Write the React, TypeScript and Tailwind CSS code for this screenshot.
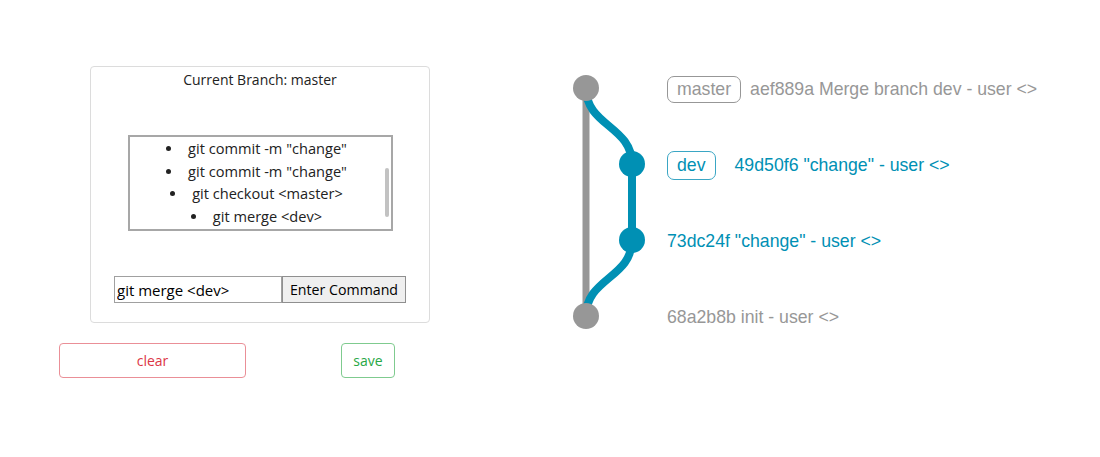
const HISTORY = [
  'git commit -m "change"',
  'git commit -m "change"',
  'git checkout <master>',
  'git merge <dev>',
]

type Row = {
  tag?: string
  text: string
  color: 'gray' | 'blue'
}

const ROWS: Row[] = [
  { tag: 'master', text: 'aef889a Merge branch dev - user <>', color: 'gray' },
  { tag: 'dev', text: '49d50f6 "change" - user <>', color: 'blue' },
  { text: '73dc24f "change" - user <>', color: 'blue' },
  { text: '68a2b8b init - user <>', color: 'gray' },
]

const GRAY = '#979797'
const BLUE = '#0090b4'

export default function App() {
  return (
    <div className="w-full h-[457px] bg-white flex pt-[50px] font-['Open_Sans',sans-serif] text-[#222]">

      {/* ── LEFT: terminal panel ── */}
      <div className="w-[570px] shrink-0">
        <div className="ml-[90px] mt-[16px] w-[340px] h-[257px] border border-[#dcdcdc] rounded flex flex-col items-center">
          <div className="mt-[3px] text-[14px] leading-5">Current Branch: master</div>

          {/* command history */}
          <div className="relative mt-[45px] w-[265px] h-[96px] border-2 border-[#a7a7a7] overflow-hidden">
            <ul className="text-[14.6px] leading-[22.7px] pr-[7px]">
              {HISTORY.map((c, i) => (
                <li key={i} className="flex items-center justify-center">
                  <span className="w-[5px] h-[5px] rounded-full bg-[#222] mr-[17px]" />
                  {c}
                </li>
              ))}
            </ul>
            <div className="absolute right-[2px] top-[31px] w-[4px] h-[49px] bg-[#c2c2c2] rounded-sm" />
          </div>

          {/* command input */}
          <div className="mt-[45px] flex h-[27px]">
            <input
              readOnly
              value="git merge <dev>"
              className="w-[168px] h-full border border-[#a0a0a0] px-[2px] text-[15px] text-black outline-none"
            />
            <button className="w-[124px] h-full border border-[#8f8f8f] bg-[#efefef] text-[14.2px] text-black">
              Enter Command
            </button>
          </div>
        </div>

        {/* actions */}
        <div className="mt-[20px] flex">
          <button className="ml-[59px] w-[187px] h-[35px] rounded border border-[#ea8f97] text-[#dc3545] text-[14px]">
            clear
          </button>
          <button className="ml-[95px] w-[54px] h-[35px] rounded border border-[#7fcb8f] text-[#28a745] text-[14px]">
            save
          </button>
        </div>
      </div>

      {/* ── RIGHT: git graph ── */}
      <div className="flex">
        <svg width="80" height="304" viewBox="0 0 80 304" className="shrink-0">
          <line x1="16" y1="38" x2="16" y2="266" stroke={GRAY} strokeWidth="7" />
          <path
            d="M16 38 C 16 76, 62 76, 62 114 L 62 190 C 62 228, 16 228, 16 266"
            fill="none"
            stroke={BLUE}
            strokeWidth="8"
          />
          <circle cx="16" cy="38" r="13" fill={GRAY} />
          <circle cx="62" cy="114" r="13" fill={BLUE} />
          <circle cx="62" cy="190" r="13" fill={BLUE} />
          <circle cx="16" cy="266" r="13" fill={GRAY} />
        </svg>

        <div className="ml-[17px] flex flex-col font-['Liberation_Sans',Arial,sans-serif] text-[17.7px]">
          {ROWS.map((r, i) => {
            const c = r.color === 'blue' ? 'text-[#0090b4]' : 'text-[#979797]'
            const b = r.color === 'blue' ? 'border-[#3aa6c4]' : 'border-[#979797]'
            return (
              <div key={i} className={`h-[76px] pt-[2px] flex items-center ${c}`}>
                {r.tag && (
                  <span
                    className={`px-[9px] flex items-center border ${b} rounded-[7px] ${
                      r.tag === 'dev' ? 'h-[29px] mr-[19px]' : 'h-[27px] mr-[9px]'
                    }`}
                  >
                    {r.tag}
                  </span>
                )}
                <span>{r.text}</span>
              </div>
            )
          })}
        </div>
      </div>
    </div>
  )
}
